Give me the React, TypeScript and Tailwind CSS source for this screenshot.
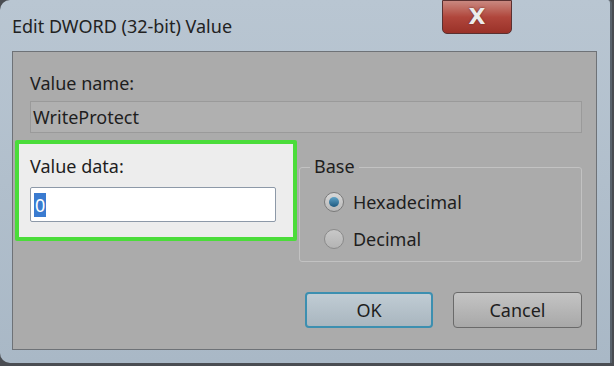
import React from "react";

export default function App() {
  const font = { fontFamily: '"Noto Sans", "Open Sans", sans-serif' };
  return (
    <div className="w-[614px] h-[366px] overflow-hidden bg-[#4a4d52]" style={font}>
      <div className="w-[612px] h-[363px] rounded-tl-[10px] rounded-bl-[10px] rounded-tr-[4px] bg-gradient-to-b from-[#b9c6d2] to-[#a9b8c6] flex flex-col border-r-2 border-[#5a636d]">
        {/* Title bar */}
        <div className="h-[51px] flex items-start relative">
          <div className="pl-[12px] pt-[13px] text-[18px] leading-[26px] text-[#222]">Edit DWORD (32-bit) Value</div>
          <div className="absolute left-[442px] top-0 w-[70px] h-[34px] rounded-b-[5px] border border-[#5a3030] bg-gradient-to-b from-[#c98880] via-[#b0463c] to-[#9a3128] flex items-center justify-center">
            <span className="text-[#ececec] text-[22px] font-bold leading-none" style={{ fontFamily: '"DejaVu Sans", sans-serif', textShadow: "0 0 2px #5a2020" }}>X</span>
          </div>
        </div>
        {/* Client area */}
        <div className="ml-[12px] w-[585px] h-[299px] border border-[#6e7277] bg-[#ababab] flex flex-col pl-[17px] pr-[14px] pt-[18px]">
          <div className="text-[18px] leading-[26px] text-[#1e1e1e]">Value name:</div>
          <div className="mt-[5px] w-[552px] h-[32px] border border-[#9a9a9a] bg-[#b0b0b0] pl-[2px] text-[18px] leading-[30px] text-[#1e1e1e]">WriteProtect</div>
          <div className="flex mt-[7px]">
            <div className="-ml-[15px] w-[284px] h-[101px] border-[4px] border-[#4bdc3a] rounded-[2px] bg-[#ededed] flex flex-col pl-[11px] pt-[9px]">
              <div className="text-[18px] leading-[26px] text-[#1e1e1e]">Value data:</div>
              <div className="mt-[8px] w-[246px] h-[35px] border border-[#8d99a8] rounded-[2px] bg-white flex items-center pl-[3px]">
                <span className="bg-[#3a7bd0] text-white text-[18px] leading-[24px] px-[1px]">0</span>
              </div>
            </div>
            <div className="ml-[2px] mt-[27px] w-[285px] h-[95px] border border-[#c2c2c2] rounded-[3px] relative flex flex-col pl-[24px] pt-[22px] gap-[13px]">
              <div className="absolute -top-[14px] left-[10px] px-[4px] bg-[#ababab] text-[18px] leading-[24px] text-[#1e1e1e]">Base</div>
              <div className="flex items-center gap-[9px]">
                <div className="w-[20px] h-[20px] rounded-full border border-[#7a7a7a] bg-gradient-to-b from-[#d8d8d8] to-[#b8b8b8] flex items-center justify-center">
                  <div className="w-[10px] h-[10px] rounded-full bg-gradient-to-b from-[#5fa3c7] to-[#1e5a80]" />
                </div>
                <span className="text-[18px] leading-[24px] text-[#1e1e1e]">Hexadecimal</span>
              </div>
              <div className="flex items-center gap-[9px]">
                <div className="w-[20px] h-[20px] rounded-full border border-[#8a8a8a] bg-gradient-to-b from-[#c8c8c8] to-[#b4b4b4]" />
                <span className="text-[18px] leading-[24px] text-[#1e1e1e]">Decimal</span>
              </div>
            </div>
          </div>
          <div className="flex mt-[30px] ml-[275px] gap-[20px]">
            <div className="w-[129px] h-[36px] rounded-[4px] border-2 border-[#3c8fb0] bg-gradient-to-b from-[#c0ccd4] to-[#a9b6bf] flex items-center justify-center text-[18px] text-[#1e1e1e]">OK</div>
            <div className="w-[130px] h-[36px] rounded-[4px] border border-[#6a6a6a] bg-gradient-to-b from-[#c4c4c4] to-[#a8a8a8] flex items-center justify-center text-[18px] text-[#1e1e1e]">Cancel</div>
          </div>
        </div>
      </div>
    </div>
  );
}
